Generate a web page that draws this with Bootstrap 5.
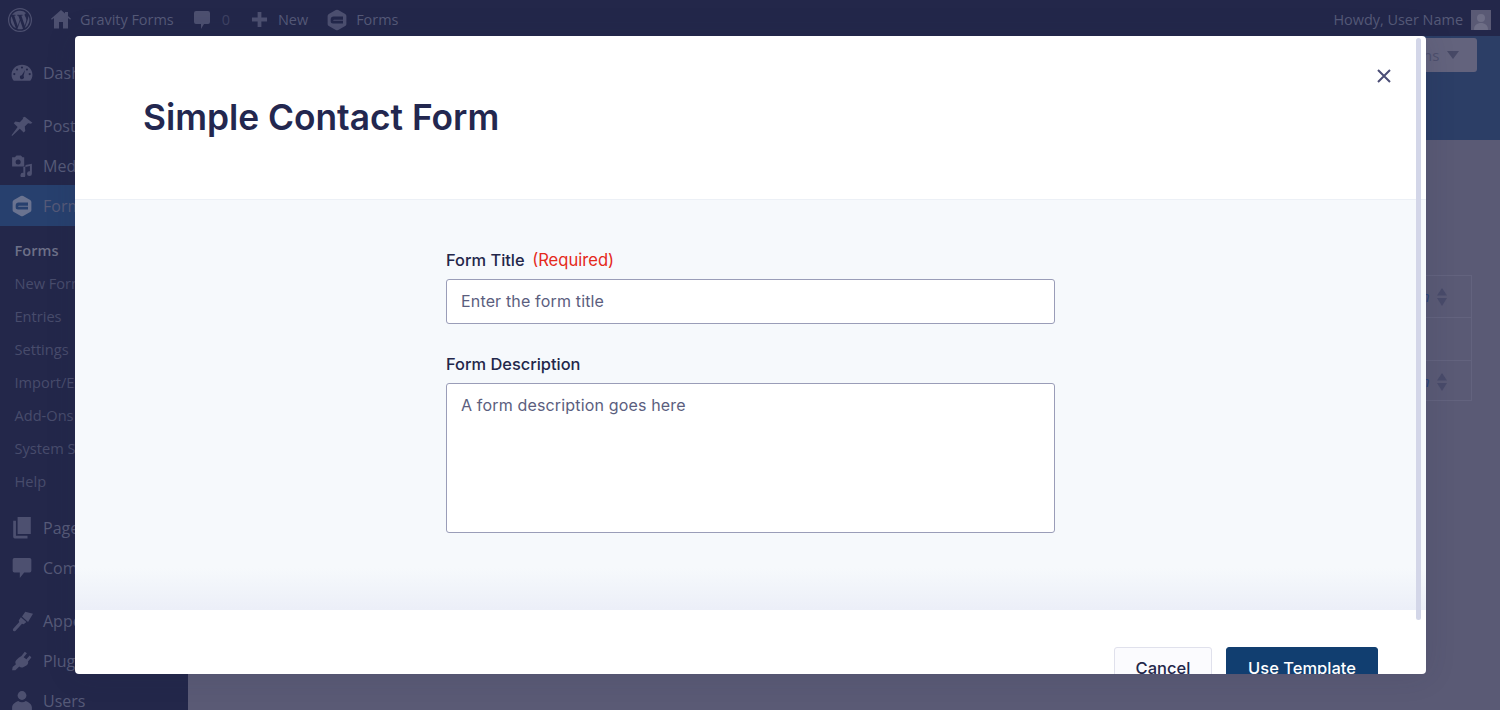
<!DOCTYPE html>
<html lang="en"><head><meta charset="utf-8"><title>Simple Contact Form</title>
<link href="https://cdn.jsdelivr.net/npm/bootstrap@5.3.0/dist/css/bootstrap.min.css" rel="stylesheet">
<style>
html,body{height:710px;overflow:hidden}
body{background:#5a5a75;font-family:"Open Sans","Noto Sans",sans-serif;color:#565a78;position:relative}
.wp-bar{height:36px;background:#23274a;font-size:14.45px;padding:3px 9px 0 8px}
.wp-bar svg,.side-item svg{fill:#4d5070;flex:none}
.wp-side{width:188px;background:#23274a;padding-top:17px;height:674px;flex:none}
.side-item{height:40px;font-size:16px;padding-left:11px;gap:10px}
.side-item svg{width:22px;height:22px}
.side-active{background:#27406e;height:41px;margin-top:-1px}
.side-active svg{fill:#6a7390}
.side-sp{margin-top:13px}
.side-sub{padding:7.5px 0 10px 14.5px;font-size:14.6px;color:#484c6c}
.side-sub div{height:33px;line-height:33px}
.side-sub .sub-on{color:#6d7088;font-weight:600}
.wp-main{min-width:0}
.wp-head{height:104px;background:#2c3e66}
.wp-btn{position:absolute;top:38px;right:23px;width:100px;height:34px;background:#63637d;border-radius:3px;color:#4d4f6c;font-size:15px;line-height:34px;padding-left:37px;display:flex;align-items:center;gap:8px}
.wp-tbl{position:absolute;left:1400px;top:275px;width:72px;height:126px;border:1px solid #63637e}
.wp-tbl i{display:block;border-bottom:1px solid #63637e;height:41.5px;position:relative}
.wp-tbl i:nth-child(2){height:43px}
.wp-tbl i:last-child{border:0}
.wp-tbl svg{position:absolute;left:36px;top:12px;fill:#494b6a}
.wp-tbl b{position:absolute;left:20px;top:9px;color:#2c4478;font-weight:400;font-size:15px;line-height:22px}
.tpl-modal{position:absolute;left:75px;top:36px;width:1351px;height:638px;border:0;border-radius:4px;overflow:hidden;background:#fff;font-family:Inter,"Liberation Sans",sans-serif;box-shadow:0 0 30px rgba(35,39,74,.15)}
.tpl-head{height:164px;padding:0 68px;border:0;border-bottom:1px solid #ecf0f6;align-items:flex-start}
.tpl-head h1{font-size:35.3px;font-weight:600;color:#23274f;margin:60px 0 0;line-height:44px}
.tpl-close{position:absolute;right:35px;top:33px;padding:0;border:0;background:none;line-height:0}
.tpl-body{height:410px;flex:none;padding:0;background:linear-gradient(#f6f9fc 0,#f6f9fc 368px,#eceff8 409px)}
.tpl-form{width:609px;margin:50px 0 0 371px}
.tpl-form label{font-size:16.4px;font-weight:500;color:#23274a;line-height:20px;margin:0 0 9px;display:flex;gap:7.5px}
.tpl-form label span{color:#e5291b;font-weight:400;font-size:16.6px}
.tpl-form .form-control{font-size:16px;border:1px solid #9a9db8;border-radius:3px;padding:0 14px 2px;height:45px;font-family:inherit;box-shadow:none;letter-spacing:.16px}
.tpl-form .form-control::placeholder{color:#5b5e7e;opacity:1}
.tpl-form textarea.form-control{height:150px;padding-top:9px;resize:none;display:block}
.tpl-field{margin-bottom:30px}
.tpl-foot{padding:37px 48px 0 0;border:0;justify-content:flex-end;gap:14px;align-items:flex-start;flex-wrap:nowrap}
.tpl-foot .btn{margin:0;height:44px;font-size:16.5px;font-weight:500;border-radius:3px;padding:0 0 2px;line-height:24px}
.tpl-cancel{width:98px;background:#fbfbfe;border:1px solid #e0e1ec;color:#23274a}
.tpl-use{width:152px;background:#113e70;border:1px solid #113e70;color:#fff}
.tpl-scroll{position:absolute;left:1341px;top:2px;width:5px;height:582px;background:#d3d6e8;border-radius:3px}
</style></head>
<body>
<svg width="0" height="0" class="position-absolute"><defs>
  <symbol id="gf-hex" viewBox="0 0 20 22"><path fill-rule="evenodd" d="M8.800 1l-7 3.900A2.400 2.400 0 0 0 .6 7v8a2.400 2.400 0 0 0 1.200 2.100l7 3.900a2.400 2.400 0 0 0 2.400 0l7-3.900a2.400 2.400 0 0 0 1.200-2.100V7a2.400 2.400 0 0 0-1.200-2.100l-7-3.900a2.400 2.400 0 0 0-2.400 0zM6.500 7.500h9.500v3.300H7c-1 0-1 1-.5 1H16v2.700H6c-1.500 0-2.300-1-2.300-2.300V10.500c0-1.800 1.100-3 2.800-3z"/></symbol>
</defs></svg>
<div class="wp-bar d-flex align-items-center">
  <svg width="24" height="24" viewBox="0 0 24 24" style="margin-right:8px"><path fill-rule="evenodd" d="M12 0a12 12 0 1 0 0 24a12 12 0 0 0 0-24zm0 1.200a10.800 10.800 0 1 1 0 21.600a10.800 10.800 0 0 1 0-21.600zM2.700 12c0 3.700 2.100 6.800 5.200 8.300L3.500 8.200A9.300 9.300 0 0 0 2.700 12zm15.600-.5c0-1.200-.4-2-.8-2.600-.5-.8-.9-1.400-.9-2.100 0-.8.600-1.600 1.500-1.600h.1a9.300 9.300 0 0 0-14 1.700h.6c1 0 2.500-.1 2.500-.1.500 0 .6.700.1.800 0 0-.5.100-1.100.1l3.400 10.200 2.100-6.200-1.500-4c-.5 0-1-.1-1-.1-.5 0-.4-.8.100-.8 0 0 1.600.1 2.500.1 1 0 2.500-.1 2.500-.1.500 0 .6.700.1.800 0 0-.5.100-1.100.1l3.400 10.100.9-3.100c.4-1.300.7-2.200.7-3zM12.200 12.800l-2.800 8.100a9.300 9.300 0 0 0 5.700-.1l-.1-.1zm8-5.300c0 .3.100.7.100 1 0 1-.2 2-.7 3.400l-2.800 8.200a9.300 9.300 0 0 0 3.400-12.600z"/></svg>
  <svg width="20" height="19" viewBox="0 0 20 19" style="margin-left:11px"><path fill-rule="evenodd" d="M10 0l4 3.400V2h3v4l3 2.700-.8 1L17 8v10.500H3V8L.8 9.700 0 8.700zM8 12v6.500h4V12z"/></svg>
  <span style="margin-left:9px">Gravity Forms</span>
  <svg width="16" height="20" viewBox="0 0 16 20" style="margin-left:20px"><path d="M2 1h12a2 2 0 0 1 2 2v9a2 2 0 0 1-2 2H10l-3 5v-5H2a2 2 0 0 1-2-2V3a2 2 0 0 1 2-2z"/></svg>
  <span style="margin-left:12px;color:#3f4263">0</span>
  <svg width="17" height="17" viewBox="0 0 18 18" style="margin-left:21px"><path d="M7 1h4v6h6v4h-6v6H7v-6H1V7h6z"/></svg>
  <span style="margin-left:10px">New</span>
  <svg width="20" height="22" style="margin-left:19px"><use href="#gf-hex"/></svg>
  <span style="margin-left:9px">Forms</span>
  <span class="ms-auto">Howdy, User Name</span>
  <span class="d-flex" style="margin-left:8px;width:20px;height:20px;background:#5a5a75"><svg width="20" height="20" viewBox="0 0 20 20" style="fill:#6e6e86"><circle cx="10" cy="8" r="4"/><path d="M3 20c0-5 3-7 7-7s7 2 7 7z"/></svg></span>
</div>
<div class="d-flex">
  <nav class="wp-side">
    <div class="side-item d-flex align-items-center"><svg viewBox="0 0 20 20"><path fill-rule="evenodd" d="M10 2.500c5 0 9.500 3.700 9.500 9 0 2.300-.7 4-2 5.500H2.500C1.200 15.500.5 13.800.5 11.500c0-5.300 4.500-9 9.500-9zM10 4a1 1 0 1 0 0 2 1 1 0 0 0 0-2zM5.500 5.800a1 1 0 1 0 0 2 1 1 0 0 0 0-2zM14.500 5.800a1 1 0 1 0 0 2 1 1 0 0 0 0-2zM3 10a1 1 0 1 0 0 2 1 1 0 0 0 0-2zM17 10a1 1 0 1 0 0 2 1 1 0 0 0 0-2zM12.800 7.200L9.800 12a1.800 1.800 0 1 0 1.600.8z"/></svg><span>Dash</span></div>
    <div class="side-item d-flex align-items-center side-sp"><svg viewBox="0 0 20 20"><path d="M12.500 1.500l7 5.500-1.500 1-2.500-.5-3 3 .5 4-1.500 1.500-3.500-3.500L1 19l-.5-.5L6 11 2.500 7.500 4 6l4 .5 3-3-.5-1z"/></svg><span>Posts</span></div>
    <div class="side-item d-flex align-items-center"><svg viewBox="0 0 20 20"><path fill-rule="evenodd" d="M1 2h2.500L5 .5h4L10.500 2H12v8.500H1zm5.500 2a2.300 2.300 0 1 0 0 4.600 2.300 2.300 0 0 0 0-4.600zM19 8v9a2.200 2.200 0 1 1-1.800-2.200V10l-4.200.8V18.500a2.200 2.200 0 1 1-1.800-2.200V11l2-.5v-1.500z"/></svg><span>Med</span></div>
    <div class="side-item side-active d-flex align-items-center"><svg viewBox="0 0 20 22"><use href="#gf-hex"/></svg><span>Form</span></div>
    <div class="side-sub"><div class="sub-on">Forms</div><div>New Form</div><div>Entries</div><div>Settings</div><div>Import/Export</div><div>Add-Ons</div><div>System Status</div><div>Help</div></div>
    <div class="side-item d-flex align-items-center"><svg viewBox="0 0 20 20"><path d="M6 0h12v15.500H6zM2 3.500h2.500V17H15v2.500H3.500A1.500 1.500 0 0 1 2 18z"/></svg><span>Page</span></div>
    <div class="side-item d-flex align-items-center"><svg viewBox="0 0 20 20"><path d="M3 1h14a1.500 1.500 0 0 1 1.500 1.500v10A1.500 1.500 0 0 1 17 14h-5l-4 5v-5H3a1.500 1.500 0 0 1-1.500-1.500v-10A1.500 1.500 0 0 1 3 1z"/></svg><span>Com</span></div>
    <div class="side-item d-flex align-items-center side-sp"><svg viewBox="0 0 20 20"><path d="M13 1.500l7 2-4.500 7.500-5.500-5zM9 6.500l5 4.500-2.500 2-1.500-.5-6 6.500c-1.500 1-3-.5-2-2L7.500 11 7 9.500z"/></svg><span>Appe</span></div>
    <div class="side-item d-flex align-items-center"><svg viewBox="0 0 20 20"><path d="M12.500 1.500l2 1.500-3 3.500 2.500 2 3-3.500 1.500 1.800-3 3.700c.5 1.500-.3 2.800-1.500 3.500l-2.500 1.500c-1.500.8-3 .5-4-.5L4 18.500H1l.5-3 3-2.500c-.8-1.200-.8-2.500.2-3.700L7 7l2.500-1.500z"/></svg><span>Plug</span></div>
    <div class="side-item d-flex align-items-center"><svg viewBox="0 0 20 20"><circle cx="10" cy="5" r="4"/><path d="M1 20v-4c0-3 3-5 5.500-6 2 1.500 5 1.500 7 0C16 11 19 13 19 16v4z"/></svg><span>Users</span></div>
  </nav>
  <main class="wp-main flex-grow-1"><div class="wp-head"></div></main>
</div>
<div class="wp-btn"><span>ons</span><svg width="12" height="8" viewBox="0 0 12 8"><path d="M0 0h12L6 8z" fill="#474966"/></svg></div>
<div class="wp-tbl"><i><b>n</b><svg width="10" height="18" viewBox="0 0 10 18"><path d="M5 0l5 7.500H0zM0 10h10l-5 8z"/></svg></i><i></i><i><b>n</b><svg width="10" height="18" viewBox="0 0 10 18"><path d="M5 0l5 7.500H0zM0 10h10l-5 8z"/></svg></i></div>

<div class="modal-content tpl-modal">
  <div class="modal-header tpl-head">
    <h1>Simple Contact Form</h1>
    <button class="tpl-close" type="button" aria-label="Close"><svg width="14" height="14" viewBox="0 0 14 14"><path d="M1 1l12 12M13 1L1 13" stroke="#4b4e76" stroke-width="2" fill="none"/></svg></button>
  </div>
  <div class="modal-body tpl-body">
    <form class="tpl-form">
      <div class="tpl-field"><label for="ft">Form Title <span>(Required)</span></label><input id="ft" class="form-control" placeholder="Enter the form title"></div>
      <div class="tpl-field"><label for="fd">Form Description</label><textarea id="fd" class="form-control" placeholder="A form description goes here"></textarea></div>
    </form>
  </div>
  <div class="modal-footer tpl-foot">
    <button class="btn tpl-cancel" type="button">Cancel</button>
    <button class="btn tpl-use" type="button">Use Template</button>
  </div>
  <div class="tpl-scroll"></div>
</div>
</body></html>
